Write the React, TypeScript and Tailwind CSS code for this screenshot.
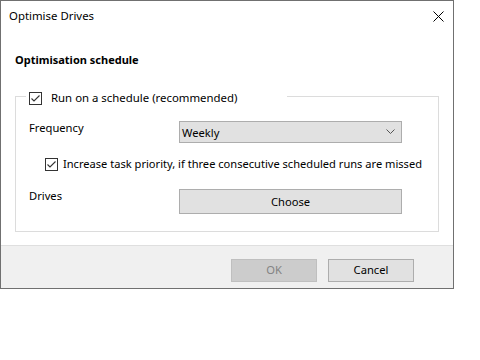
import React from "react";

const font = { fontFamily: '"Noto Sans", "Open Sans", sans-serif' };

const CheckBox = () => (
  <span className="w-[13px] h-[13px] border border-[#333333] bg-white flex items-center justify-center shrink-0">
    <svg width="11" height="11" viewBox="0 0 11 11">
      <path d="M1.5 5.5 L4 8 L9.5 2.5" fill="none" stroke="#333333" strokeWidth="1.1" />
    </svg>
  </span>
);

export default function App() {
  return (
    <div className="w-[480px] h-[360px] bg-white text-[11.2px] text-black whitespace-nowrap" style={font}>
      <div className="w-[454px] h-[289px] border border-[#707070] flex flex-col">
        {/* title bar */}
        <div className="h-[30px] flex items-center justify-between pl-[8px] pr-[9px] shrink-0">
          <span className="leading-[16px] text-[11.4px]">Optimise Drives</span>
          <svg width="11" height="11" viewBox="0 0 11 11">
            <path d="M0.5 0.5 L10.5 10.5 M10.5 0.5 L0.5 10.5" stroke="#000" strokeWidth="1" />
          </svg>
        </div>

        {/* body */}
        <div className="h-[214px] shrink-0 px-[14px] pt-[21px]">
          <div className="font-bold leading-[16px] text-[11px]">Optimisation schedule</div>
          <div className="mt-[28px] w-[424px] h-[136px] border border-[#dcdcdc] flex flex-col">
            <div className="-mt-[7px] ml-[10px] w-[261px] h-[16px] bg-white flex items-center pl-[3px] gap-[9px]">
              <CheckBox />
              <span className="leading-[16px] text-[11.4px]">Run on a schedule (recommended)</span>
            </div>
            <div className="mt-[15px] flex items-start pl-[13px] h-[22px]">
              <span className="w-[150px] leading-[16px] -mt-[1px]">Frequency</span>
              <div className="w-[223px] h-[22px] bg-[#e1e1e1] border border-[#adadad] flex items-center justify-between pl-[2px] pr-[6px]">
                <span className="leading-[16px] mt-[1px]">Weekly</span>
                <svg width="9" height="6" viewBox="0 0 9 6">
                  <path d="M0.5 0.5 L4.5 4.5 L8.5 0.5" fill="none" stroke="#555555" strokeWidth="1" />
                </svg>
              </div>
            </div>
            <div className="mt-[13px] h-[16px] flex items-center pl-[29px] gap-[5px]">
              <CheckBox />
              <span className="leading-[16px] text-[11.1px]">
                Increase task priority, if three consecutive scheduled runs are missed
              </span>
            </div>
            <div className="mt-[17px] flex items-start pl-[13px] h-[25px]">
              <span className="w-[150px] leading-[16px] mt-[-1px]">Drives</span>
              <div className="w-[223px] h-[25px] bg-[#e1e1e1] border border-[#adadad] flex items-center justify-center">
                <span className="leading-[16px]">Choose</span>
              </div>
            </div>
          </div>
        </div>

        {/* footer */}
        <div className="flex-1 border-t border-[#dfdfdf] bg-[#f0f0f0] flex justify-end items-start pt-[13px] pr-[39px] gap-[11px]">
          <div className="w-[86px] h-[23px] bg-[#cccccc] border border-[#bfbfbf] flex items-center justify-center text-[#838383]">
            OK
          </div>
          <div className="w-[86px] h-[23px] bg-[#e1e1e1] border border-[#adadad] flex items-center justify-center">
            Cancel
          </div>
        </div>
      </div>
    </div>
  );
}
